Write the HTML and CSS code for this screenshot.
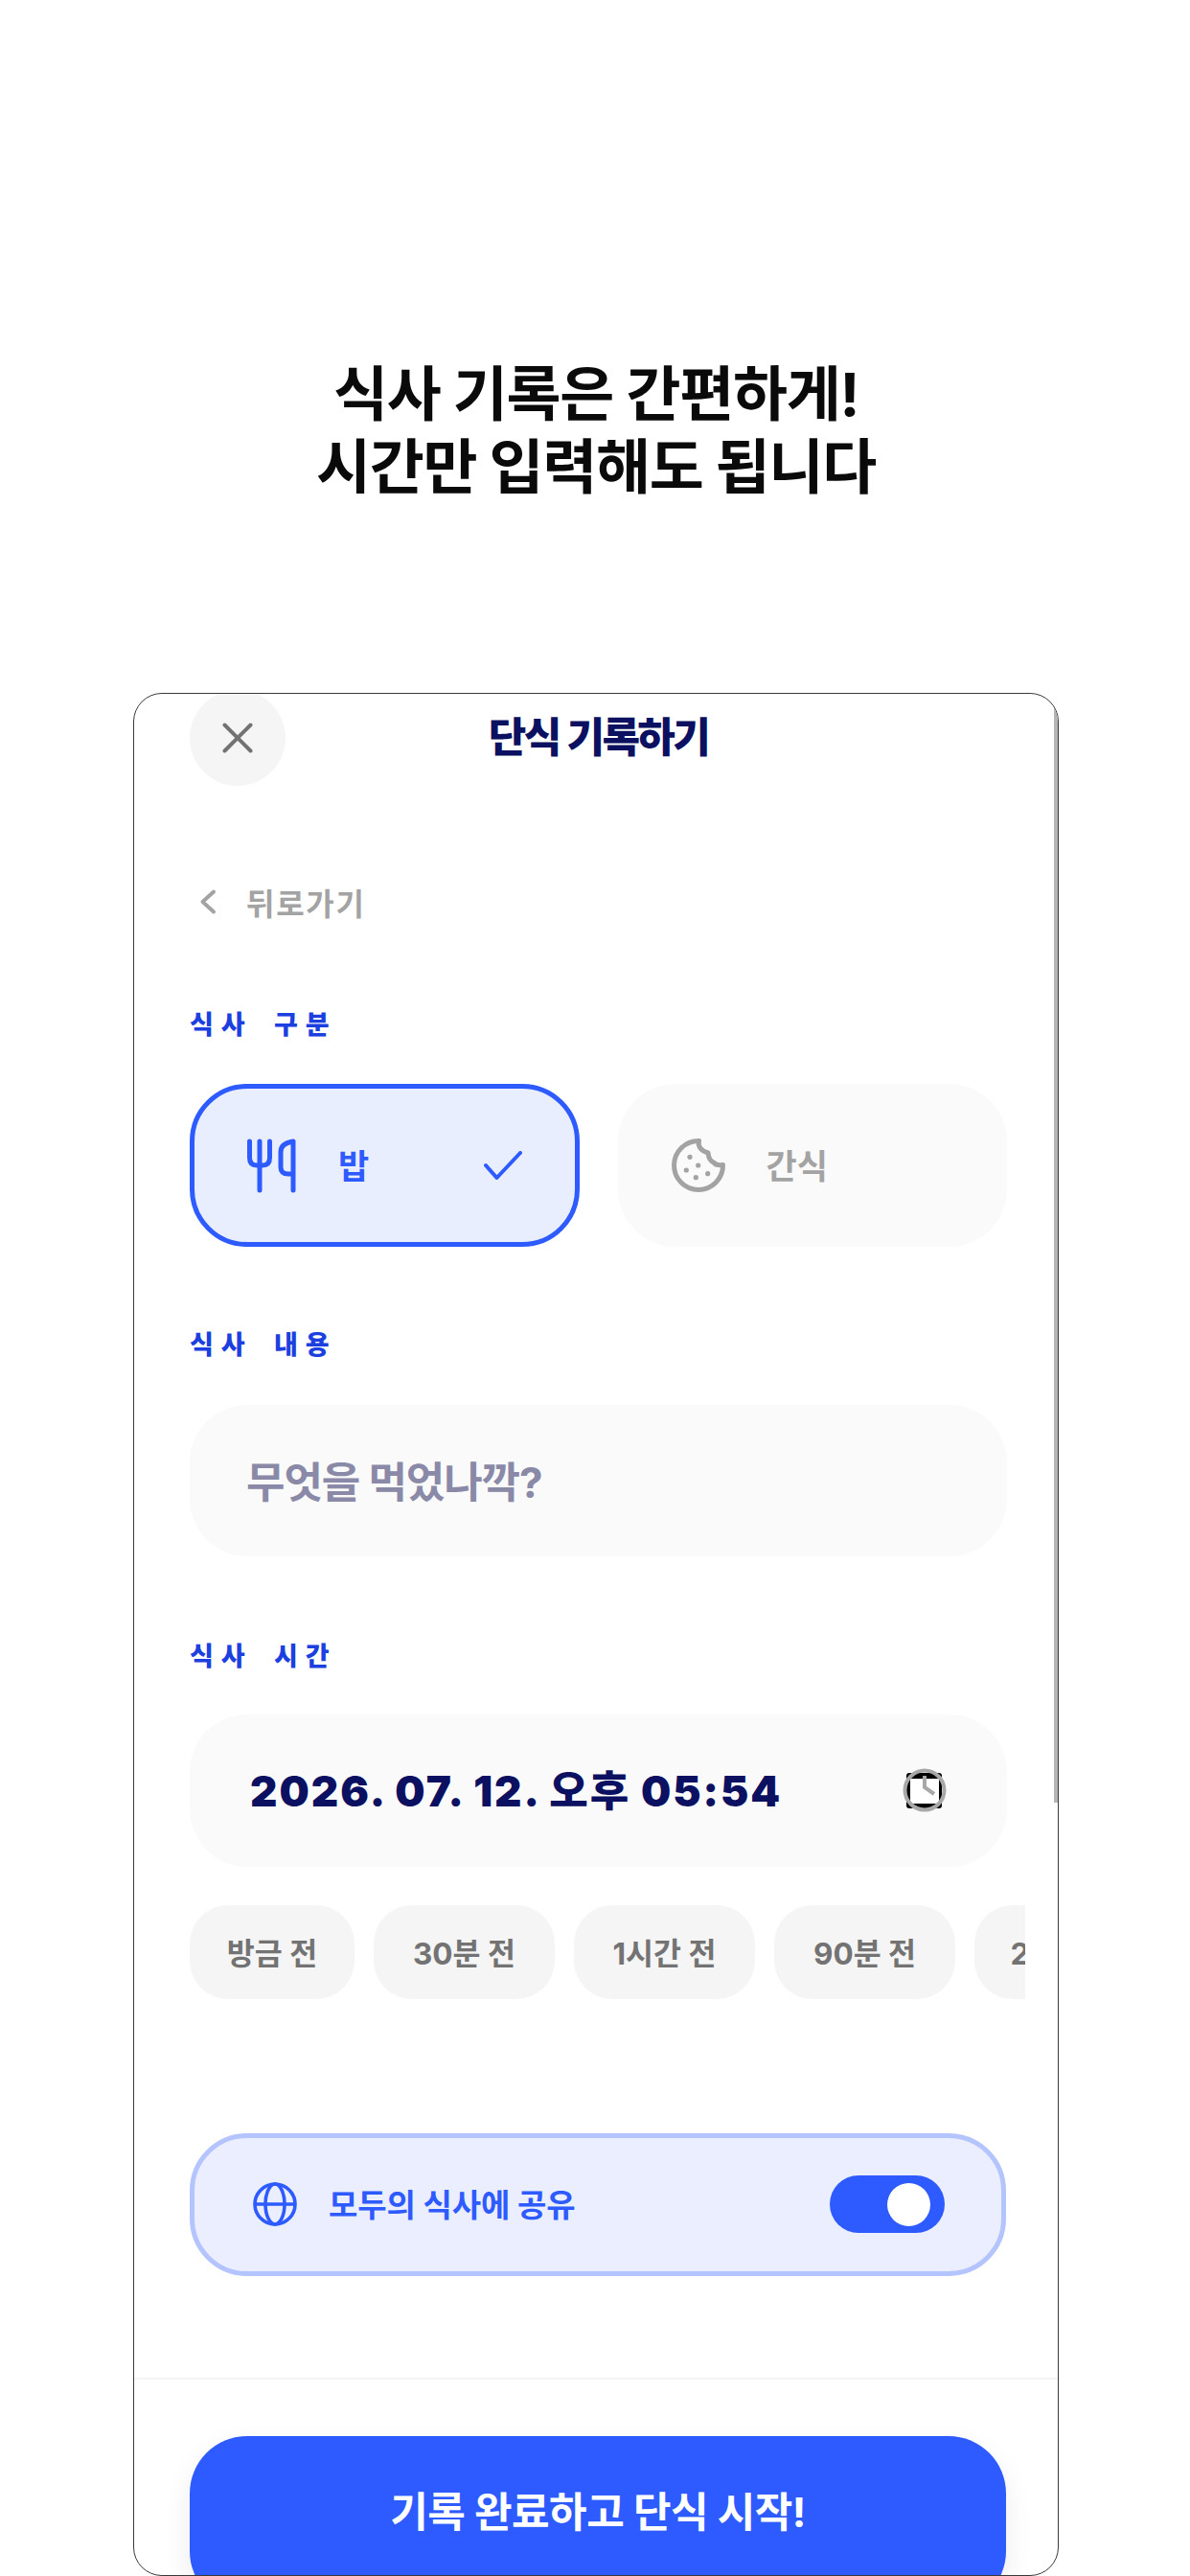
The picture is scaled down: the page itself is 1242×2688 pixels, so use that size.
FILE: index.html
```html
<!DOCTYPE html>
<html lang="ko">
<head>
<meta charset="utf-8">
<title>단식 기록하기</title>
<link rel="stylesheet" href="styles.css">
</head>
<body>
<header class="headline">
  <h1>식사 기록은 간편하게!<br>시간만 입력해도 됩니다</h1>
</header>
<main class="frame">
  <div class="scrollbar"></div>
  <div class="sheet">
    <div class="topbar">
      <button class="close" type="button" aria-label="닫기">
        <svg width="36" height="36" viewBox="0 0 36 36"><path d="M4.5 4.5 L31.5 31.5 M31.5 4.5 L4.5 31.5" class="ico-x"/></svg>
      </button>
      <h2 class="title">단식 기록하기</h2>
    </div>
    <div class="back">
      <svg width="36" height="36" viewBox="0 0 36 36"><path d="M24 7.5 L12.5 18 L24 28.5" class="ico-back"/></svg>
      <span>뒤로가기</span>
    </div>

    <div class="label label-meal">식사 구분</div>
    <div class="tiles">
      <div class="tile tile-on">
        <svg class="tile-ico" width="60" height="60" viewBox="22 36 60 60"><path d="M29.5 41 V58 Q29.5 66 37 66 H43 Q50.5 66 50.5 58 V41 M40 41 V92 M75 41 V92 M75 41 Q62 43 62 52 V68 Q62 75 70 75 H75" class="ico-blue"/></svg>
        <span>밥</span>
        <svg class="check" width="40" height="30" viewBox="0 0 40 30"><path d="M2 15 L13.5 28 L38 2" class="ico-check"/></svg>
      </div>
      <div class="tile tile-off">
        <svg class="tile-ico" width="60" height="60" viewBox="18 36 60 60">
          <path d="M48.5 40.5 A25.5 25.5 0 1 0 73.5 65.5 C70 66 66 66 64 63 C60 61.5 58.5 58 58 53 C50.5 51 47 46 48.5 40.5 Z" class="ico-grey"/>
          <circle cx="39" cy="57.3" r="2.6" class="dot"/><circle cx="47.7" cy="66" r="2.6" class="dot"/><circle cx="35.3" cy="71" r="2.6" class="dot"/><circle cx="57.7" cy="74.7" r="2.6" class="dot"/><circle cx="45.3" cy="78.7" r="2.6" class="dot"/>
        </svg>
        <span>간식</span>
      </div>
    </div>

    <div class="label label-content">식사 내용</div>
    <div class="field field-note">무엇을 먹었나깍?</div>

    <div class="label label-time">식사 시간</div>
    <div class="field field-date">
      <span>2026. 07. 12. 오후 05:54</span>
      <svg class="cal" width="50" height="50" viewBox="0 0 50 50">
        <rect x="4" y="7" width="37" height="37" rx="3" class="cal-bg"/>
        <rect x="8" y="13" width="30" height="26" class="cal-in"/>
        <circle cx="23" cy="25" r="20.5" class="cal-ring"/>
        <path d="M23 10 V22 L33 29" class="cal-hand"/>
      </svg>
    </div>

    <div class="chips">
      <div class="chip chip-a">방금 전</div>
      <div class="chip chip-b">30분 전</div>
      <div class="chip chip-b">1시간 전</div>
      <div class="chip chip-b">90분 전</div>
      <div class="chip chip-b">2시간 전</div>
    </div>

    <div class="share">
      <svg width="46" height="46" viewBox="0 0 46 46"><g class="ico-globe"><circle cx="23" cy="23" r="21"/><ellipse cx="23" cy="23" rx="10" ry="21"/><path d="M2 23 H44"/></g></svg>
      <span class="share-text">모두의 식사에 공유</span>
      <div class="toggle"><div class="knob"></div></div>
    </div>

    <footer class="foot">
      <button class="cta" type="button">기록 완료하고 단식 시작!</button>
    </footer>
  </div>
</main>
</body>
</html>
```

FILE: styles.css
```css
* { box-sizing: border-box; }
html, body { margin: 0; padding: 0; background: #fff; }
body {
  width: 1242px;
  height: 2688px;
  overflow: hidden;
  font-family: Inter, "Noto Sans CJK KR", sans-serif;
}
.headline { height: 723px; padding: 374px 0 0 2px; text-align: center; }
.headline h1 {
  margin: 0;
  font-size: 62px;
  line-height: 76px;
  font-weight: 700;
  letter-spacing: -1.3px;
  color: #0a0a0a;
}
.frame {
  position: relative;
  margin-left: 138.5px;
  width: 966.5px;
  height: 1965px;
  border: 1.5px solid #3a3a3a;
  border-radius: 30px;
  overflow: hidden;
  background: #fff;
}
.scrollbar {
  position: absolute;
  top: 14px;
  right: 0;
  width: 4px;
  height: 1143px;
  background: #b5b5b5;
}
.sheet { padding: 0 53px 0 58.5px; margin-top: -4.5px; }
.topbar { position: relative; height: 100px; display: flex; align-items: center; justify-content: center; padding-bottom: 7px; }
.close {
  position: absolute;
  left: 0;
  top: 0;
  width: 100px;
  height: 100px;
  border: 0;
  border-radius: 50%;
  background: #f5f5f5;
  display: flex;
  align-items: center;
  justify-content: center;
  padding: 0;
}
.ico-x { fill: none; stroke: #737373; stroke-width: 4; stroke-linecap: round; }
.title {
  margin: 0;
  font-size: 43px;
  font-weight: 800;
  letter-spacing: -2.6px;
  word-spacing: 1px;
  color: #0b1060;
}
.back {
  margin-top: 101px;
  height: 40px;
  display: flex;
  align-items: center;
  gap: 22px;
  padding-left: 1px;
  font-size: 32px;
  font-weight: 700;
  letter-spacing: 1.7px;
  color: #a3a3a3;
}
.ico-back { fill: none; stroke: #a3a3a3; stroke-width: 4; stroke-linecap: round; stroke-linejoin: round; }
.label {
  height: 34px;
  line-height: 34px;
  font-size: 27px;
  font-weight: 800;
  letter-spacing: 7.8px;
  word-spacing: 9px;
  color: #1c3fe0;
}
.label-meal { margin-top: 92px; }
.label-content { margin-top: 86px; }
.label-time { margin-top: 88px; }
.tiles { margin-top: 44px; display: grid; grid-template-columns: 1fr 1fr; gap: 40px; width: 853px; }
.tile {
  height: 170px;
  border-radius: 60px;
  display: flex;
  align-items: center;
  gap: 41px;
  font-size: 35px;
  font-weight: 700;
}
.tile span { margin-bottom: 3px; }
.tile-on { gap: 40px; background: #e9eeff; border: 5px solid #2d5bff; color: #2d5bff; padding: 0 55px 0 50px; }
.tile-off { background: #fafafa; color: #a3a3a3; padding: 0 0 0 54px; }
.check { margin-left: auto; }
.ico-blue, .ico-check { fill: none; stroke: #2d5bff; stroke-linecap: round; stroke-linejoin: round; }
.ico-blue { stroke-width: 5; }
.ico-check { stroke-width: 4; }
.ico-grey { fill: none; stroke: #a3a3a3; stroke-width: 5; stroke-linejoin: round; }
.dot { fill: #a3a3a3; }
.field {
  width: 853px;
  height: 158px;
  border-radius: 60px;
  background: #fafafa;
  display: flex;
  align-items: center;
  font-size: 44px;
  font-weight: 700;
}
.field-note { margin-top: 45px; padding: 0 0 2px 59px; color: #8a8aa8; letter-spacing: -1.1px; }
.field-date {
  margin-top: 43px;
  height: 159px;
  padding: 0 59px 0 63px;
  justify-content: space-between;
  color: #0b1060;
  font-weight: 900;
  letter-spacing: 2px;
}
.field-date span { margin-bottom: 5px; }
.cal-bg { fill: #000; }
.cal-in { fill: #fff; }
.cal-ring { fill: none; stroke: #a8a8a8; stroke-width: 4; }
.cal-hand { fill: none; stroke: #a8a8a8; stroke-width: 4; }
.chips { margin-top: 40px; margin-right: -19px; display: flex; gap: 20px; overflow: hidden; }
.chip {
  flex: none;
  height: 98px;
  border-radius: 40px;
  background: #f5f5f5;
  display: flex;
  align-items: center;
  justify-content: center;
  padding-bottom: 2px;
  font-size: 31.5px;
  font-weight: 700;
  color: #737373;
}
.chip-a { width: 172px; }
.chip-b { width: 189px; }
.share {
  margin-top: 140px;
  width: 852px;
  height: 149px;
  border: 5px solid #b4c4ff;
  border-radius: 60px;
  background: #ebeeff;
  padding: 0 59px 0 61px;
  display: flex;
  align-items: center;
  gap: 33px;
  font-size: 33px;
  font-weight: 700;
  letter-spacing: -0.1px;
  color: #2d5bff;
}
.share-text { margin-bottom: 3px; }
.ico-globe { fill: none; stroke: #2d5bff; stroke-width: 3.6; }
.toggle {
  margin-left: auto;
  width: 120px;
  height: 60px;
  border-radius: 30px;
  background: #2d5bff;
  display: flex;
  align-items: center;
  justify-content: flex-end;
  padding-right: 15px;
}
.knob { width: 45px; height: 45px; border-radius: 50%; background: #fff; }
.foot { margin: 106px -53px 0 -58.5px; padding: 59px 53px 0 58.5px; border-top: 2px solid #f5f5f5; }
.cta {
  display: block;
  width: 852px;
  height: 180px;
  border: 0;
  border-radius: 60px;
  background: #2d5bff;
  box-shadow: 0 12px 30px rgba(0, 0, 0, 0.08);
  color: #fff;
  font-family: inherit;
  font-size: 43px;
  font-weight: 700;
  letter-spacing: -0.5px;
  padding: 0 0 27px;
}
```
